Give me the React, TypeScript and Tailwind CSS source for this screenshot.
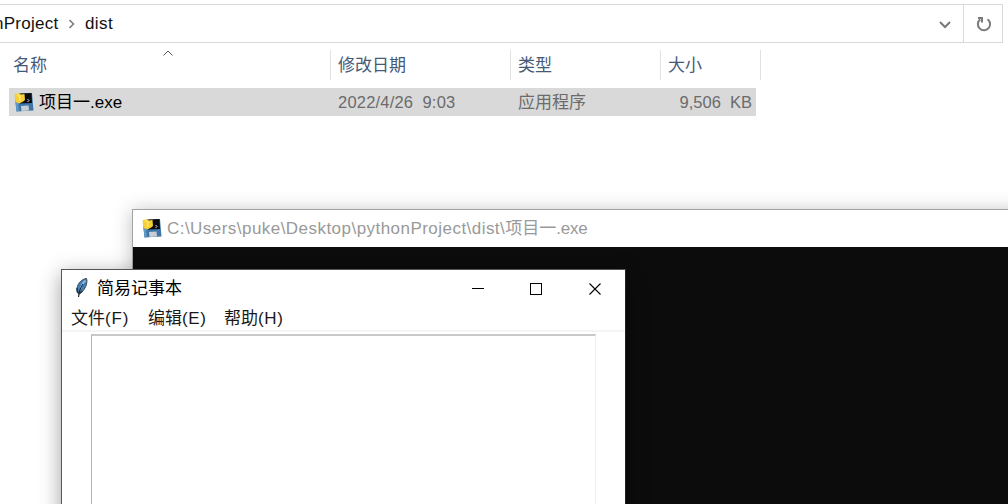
import type { ReactNode } from 'react'

function ExeIcon() {
  return (
    <svg width="20" height="20" viewBox="0 0 20 20" className="-mt-px block shrink-0">
      <path d="M1 2.500L18 1L19.500 18.500L2.500 19.500Z" fill="#3f76a8" />
      <path d="M1 8L2.500 19.500L5 19L4 9Z" fill="#5f97c6" />
      <path d="M5 1.500L17.500 1L18 11L6 11.500Z" fill="#080b10" />
      <path d="M0.500 2.500L5 1L7 2.500L10.500 2L11 8L8.500 10L5 11.500L1.500 10Z" fill="#f6ce35" />
      <path d="M3 3L6 4L5.500 9" fill="none" stroke="#ffe875" strokeWidth="1.500" />
      <path d="M13.500 7L15 8.500L13.500 10" fill="none" stroke="#d5dae0" />
      <path d="M7 14L14.500 13.500L15 18.500L7.500 19Z" fill="#c9ced4" />
    </svg>
  )
}

function FeatherIcon() {
  return (
    <svg width="14" height="20" viewBox="0 0 14 20" className="-mt-[2px] block shrink-0">
      <path d="M11.500 0.500C7 1 3 5 2 10C1.500 13 2.500 15 4 16C8 14 11 9 11.500 6C12 4 12 2 11.500 0.500Z" fill="#4580b8" stroke="#3a4550" />
      <path d="M10.500 2.500C7.500 5 6 8 5.500 11" stroke="#9cc8ec" strokeWidth="1.500" fill="none" />
      <path d="M8 6C5 10 4 14 3.500 19" stroke="#222b33" strokeWidth="1.200" fill="none" />
      <path d="M2 10L2.500 14L4.500 15.500L7.500 13" stroke="#29333d" strokeWidth="1.500" fill="none" />
    </svg>
  )
}

function HeaderCell({ children, className }: { children: ReactNode; className: string }) {
  return (
    <div className={`flex h-[30px] items-center border-r border-[#e2e2e2] pt-[2px] ${className}`}>
      {children}
    </div>
  )
}

function AddressBar() {
  return (
    <div className="mt-1 flex h-[39px] w-[1003px] border-y border-r border-[#d9d9d9] text-[17px] text-[#111]">
      <div className="flex min-w-0 flex-1 items-center">
        <span className="-ml-[6px] w-[65px] whitespace-nowrap tracking-[0.25px]">nProject</span>
        <svg width="8" height="10" viewBox="0 0 8 10" className="ml-[9px]">
          <path d="M1.500 1L5.500 5L1.500 9" fill="none" stroke="#777" strokeWidth="1.500" />
        </svg>
        <span className="ml-[9px] tracking-[0.4px]">dist</span>
      </div>
      <div className="flex w-[24px] items-center">
        <svg width="12" height="8" viewBox="0 0 12 8" className="mt-[2px]">
          <path d="M1 1L6 6L11 1" fill="none" stroke="#7a7a7a" strokeWidth="2" />
        </svg>
      </div>
      <div className="flex w-[39px] items-center justify-center border-l border-[#d9d9d9]">
        <svg width="16" height="16" viewBox="0 0 16 16" className="ml-[1px]">
          <path d="M11.500 3.200A6.100 6.100 0 1 1 4.200 3.400" fill="none" stroke="#7a7a7a" strokeWidth="2" />
          <path d="M2 2H6V6.500" fill="none" stroke="#7a7a7a" strokeWidth="2" />
        </svg>
      </div>
    </div>
  )
}

function FileList() {
  return (
    <div className="text-[17px]">
      <div className="relative mt-[7px] flex text-[#465a78]">
        <HeaderCell className="w-[331px] pl-[13px]">名称</HeaderCell>
        <HeaderCell className="w-[180px] pl-[7px]">修改日期</HeaderCell>
        <HeaderCell className="w-[150px] pl-[7px]">类型</HeaderCell>
        <HeaderCell className="w-[100px] pl-[7px]">大小</HeaderCell>
        <svg width="10" height="6" viewBox="0 0 10 6" className="absolute top-0 left-[163px]">
          <path d="M0.500 5.500L5 1L9.500 5.500" fill="none" stroke="#555" />
        </svg>
      </div>
      <div className="mt-2 ml-[9px] flex h-7 w-[747px] items-center bg-[#d9d9d9] pr-1 pl-[5px] text-[#6b6b6b]">
        <ExeIcon />
        <span className="ml-[5px] w-[299px] pt-px text-black">项目一.exe</span>
        <span className="w-[180px] text-[16.500px] tracking-[0.2px] [word-spacing:4.500px]">2022/4/26 9:03</span>
        <span className="flex-1 pt-px">应用程序</span>
        <span className="text-[16.500px] [word-spacing:4.500px]">9,506 KB</span>
      </div>
    </div>
  )
}

function ConsoleWindow() {
  return (
    <div className="absolute top-[209px] left-[132px] h-[310px] w-[900px] border border-[#a3a3a3] bg-[#0c0c0c] shadow-[0_2px_18px_rgba(0,0,0,0.26)]">
      <div className="flex h-[37px] items-center bg-white pl-[9px] text-[17px] text-[#999]">
        <ExeIcon />
        <span className="ml-[5px] whitespace-nowrap tracking-[0.46px]">
          C:\Users\puke\Desktop\pythonProject\dist\
        </span>
        <span>项目一</span>
        <span className="tracking-[-0.2px]">.exe</span>
      </div>
    </div>
  )
}

function NotepadWindow() {
  return (
    <div className="absolute top-[269px] left-[61px] h-[260px] w-[565px] border border-[#555] border-r-[#222] bg-white shadow-[0_5px_20px_rgba(0,0,0,0.38)]">
      <div className="flex h-[37px] items-center pl-[13px]">
        <FeatherIcon />
        <span className="ml-[8px] flex-1 text-[17px] text-black">简易记事本</span>
        <svg width="130" height="12" viewBox="0 0 130 12" shapeRendering="crispEdges" className="mr-[23px]" stroke="#000" fill="none">
          <path d="M0 5.500H12" />
          <path d="M58.500 0.500H69.500V11.500H58.500Z" />
          <path d="M117.500 0.500L128.500 11.500M128.500 0.500L117.500 11.500" shapeRendering="auto" strokeWidth="1.100" />
        </svg>
      </div>
      <div className="flex h-[25px] items-center gap-[18px] border-b-2 border-[#f5f5f5] pl-[9px] text-[17px] leading-none text-[#1a1a1a]">
        <span className="w-[59px] whitespace-nowrap">文件<span className="tracking-[0.9px]">(F)</span></span>
        <span className="w-[58px] whitespace-nowrap">编辑<span className="tracking-[0.6px]">(E)</span></span>
        <span className="w-[60px] whitespace-nowrap">帮助<span className="tracking-[0.6px]">(H)</span></span>
      </div>
      <div className="mt-[2px] ml-[29px] h-[200px] w-[505px] border-t-2 border-r border-l border-t-[#c9c9c9] border-r-[#f0f0f0] border-l-[#b5b5b5]" />
    </div>
  )
}

export default function App() {
  return (
    <main className="relative flex h-[504px] w-[1008px] flex-col overflow-hidden bg-white font-['Liberation_Sans','Noto_Sans_CJK_SC',sans-serif]">
      <AddressBar />
      <FileList />
      <ConsoleWindow />
      <NotepadWindow />
    </main>
  )
}
